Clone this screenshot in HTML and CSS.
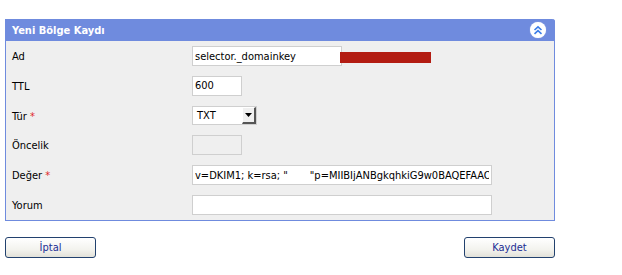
FILE: index.html
```html
<!DOCTYPE html>
<html lang="tr">
<head>
    <meta charset="UTF-8">
    <title>Yeni Bölge Kaydı</title>
    <link rel="stylesheet" href="styles.css">
</head>
<body>

    <div class="panel">
        <div class="panel-head">
            <span class="panel-title">Yeni Bölge Kaydı</span>
            <span class="collapse-btn">
                <svg width="10" height="10" viewBox="0 0 10 10">
                    <path d="M1.5 5 L5 1.8 L8.5 5 M1.5 8.8 L5 5.6 L8.5 8.8" fill="none" stroke="#3b7de8" stroke-width="1.6"/>
                </svg>
            </span>
        </div>

        <div class="panel-body">
            <div class="row">
                <label>Ad</label>
                <div class="field">
                    <input class="txt w150" type="text" value="selector._domainkey">
                    <span class="redact"></span>
                </div>
            </div>
            <div class="row">
                <label>TTL</label>
                <div class="field"><input class="txt w50" type="text" value="600"></div>
            </div>
            <div class="row">
                <label>Tür <span class="req">*</span></label>
                <div class="field">
                    <div class="select">
                        <span class="select-val">TXT</span>
                        <span class="select-btn">
                            <svg width="7" height="4" viewBox="0 0 7 4"><path d="M0 0 H7 L3.5 4 Z" fill="#000"/></svg>
                        </span>
                    </div>
                </div>
            </div>
            <div class="row">
                <label>Öncelik</label>
                <div class="field"><input class="txt w50 disabled" type="text" disabled></div>
            </div>
            <div class="row">
                <label>Değer <span class="req">*</span></label>
                <div class="field">
                    <input class="txt w300" type="text" value='v=DKIM1; k=rsa; "       "p=MIIBIjANBgkqhkiG9w0BAQEFAAOCAQ8AMIIBCgKCAQEA'>
                </div>
            </div>
            <div class="row">
                <label>Yorum</label>
                <div class="field"><input class="txt w300" type="text"></div>
            </div>
        </div>
    </div>

    <div class="actions">
        <button class="btn">İptal</button>
        <button class="btn">Kaydet</button>
    </div>

</body>
</html>
```

FILE: styles.css
```css
body {
    margin: 0;
    padding: 19px 0 0 5px;
    background: #fff;
    font-family: "DejaVu Sans Condensed", "DejaVu Sans", sans-serif;
    font-size: 11px;
    color: #000;
}
.panel {
    width: 548px;
    border: 1px solid #6f8bde;
    border-top: none;
    border-top-right-radius: 3px;
    background: #efefef;
}
.panel-head {
    height: 22px;
    margin: 0 -1px;
    padding: 0 9px 0 7px;
    background: #6f8bde;
    border-top-right-radius: 3px;
    display: flex;
    align-items: center;
    justify-content: space-between;
}
.panel-title {
    color: #fff;
    font-weight: bold;
    font-size: 11px;
}
.collapse-btn {
    width: 16px;
    height: 16px;
    border-radius: 50%;
    background: #fff;
    box-shadow: 0 0 1px #c8d2f0;
    display: flex;
    align-items: center;
    justify-content: center;
}
.panel-body {
    padding: 5px 0 5px 0;
    display: flex;
    flex-direction: column;
    gap: 9.8px;
}
.row {
    display: flex;
    align-items: center;
    height: 20px;
}
.row label {
    width: 180px;
    padding-left: 6px;
    padding-top: 1px;
    flex-shrink: 0;
}
.req {
    color: #e0282a;
}
.field {
    display: flex;
    align-items: center;
}
.txt {
    box-sizing: border-box;
    height: 20px;
    border: 1px solid #cfcfcf;
    background: #fff;
    font-family: inherit;
    font-size: 11px;
    padding: 0 2px;
    margin: 0;
    outline: none;
    color: #000;
}
.w150 { width: 150px; }
.w50 { width: 50px; }
.w300 { width: 300px; }
.txt.disabled {
    background: #efefef;
}
.redact {
    width: 91px;
    height: 11px;
    margin-left: -2px;
    margin-top: 2px;
    background: #b31c12;
}
.select {
    box-sizing: border-box;
    width: 65px;
    height: 19px;
    border: 1px solid #cfcfcf;
    background: #fff;
    display: flex;
    align-items: center;
    justify-content: space-between;
}
.select-val {
    padding-left: 4px;
}
.select-btn {
    width: 14px;
    height: 17px;
    box-sizing: border-box;
    background: #f0f0f0;
    border-right: 2px solid #555;
    border-bottom: 2px solid #555;
    border-left: 1px solid #fff;
    border-top: 1px solid #fff;
    display: flex;
    align-items: center;
    justify-content: center;
}
.actions {
    width: 550px;
    margin-top: 16px;
    display: flex;
    justify-content: space-between;
}
.btn {
    width: 91px;
    height: 21px;
    border: 1px solid #22416e;
    border-radius: 3px;
    background: linear-gradient(to bottom, #ffffff, #f3f3ee 60%, #e2e1d9);
    font-family: inherit;
    font-size: 11px;
    color: #1c2e94;
    padding: 0;
    cursor: pointer;
}
```
